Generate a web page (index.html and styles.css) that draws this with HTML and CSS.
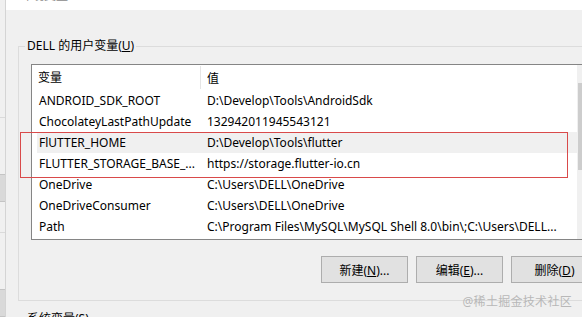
FILE: index.html
```html
<!DOCTYPE html>
<html lang="zh-CN">
  <head>
    <meta charset="UTF-8" />
    <meta name="viewport" content="width=device-width, initial-scale=1.0" />
    <title>环境变量</title>
    <link rel="stylesheet" href="styles.css">
  </head>
  <body>
    <div class="side">
      <div class="side-top"></div>
      <div class="side-part"></div>
      <div class="side-btn"></div>
      <div class="side-mid"></div>
      <div class="side-part"></div>
      <div class="side-btn"></div>
    </div>

    <div class="dialog">
      <div class="title"><span>环境变量</span></div>

      <fieldset class="group">
        <legend>DELL 的用户变量(<u>U</u>)</legend>

        <div class="list">
          <div class="rows">
            <div class="list-head">
              <div class="head-name">变量</div>
              <div class="head-value">值</div>
            </div>
            <div class="row">
              <div class="cell-name">ANDROID_SDK_ROOT</div>
              <div class="cell-value">D:\Develop\Tools\AndroidSdk</div>
            </div>
            <div class="row">
              <div class="cell-name">ChocolateyLastPathUpdate</div>
              <div class="cell-value">132942011945543121</div>
            </div>
            <div class="row hover">
              <div class="cell-name">FlUTTER_HOME</div>
              <div class="cell-value">D:\Develop\Tools\flutter</div>
            </div>
            <div class="row">
              <div class="cell-name">FLUTTER_STORAGE_BASE_...</div>
              <div class="cell-value">https://storage.flutter-io.cn</div>
            </div>
            <div class="row">
              <div class="cell-name">OneDrive</div>
              <div class="cell-value">C:\Users\DELL\OneDrive</div>
            </div>
            <div class="row">
              <div class="cell-name">OneDriveConsumer</div>
              <div class="cell-value">C:\Users\DELL\OneDrive</div>
            </div>
            <div class="row">
              <div class="cell-name">Path</div>
              <div class="cell-value">C:\Program Files\MySQL\MySQL Shell 8.0\bin\;C:\Users\DELL...</div>
            </div>
          </div>
          <div class="scrollbar">
            <div class="scroll-up"></div>
            <div class="scroll-thumb"></div>
          </div>
          <div class="mark"></div>
        </div>

        <div class="buttons">
          <button type="button">新建(<u>N</u>)...</button>
          <button type="button">编辑(<u>E</u>)...</button>
          <button type="button">删除(<u>D</u>)</button>
        </div>
      </fieldset>

      <fieldset class="group">
        <legend>系统变量(<u>S</u>)</legend>
      </fieldset>
    </div>

    <div class="watermark">@稀土掘金技术社区</div>
  </body>
</html>
```

FILE: styles.css
```css
body {
  font-family: "Noto Sans", "Noto Sans CJK SC", sans-serif;
  font-size: 12px;
  color: #000;
  margin: 0;
  padding: 0;
  width: 582px;
  height: 317px;
  overflow: hidden;
  display: flex;
  background-color: #f0f0f0;
}

.side {
  width: 5px;
  flex-shrink: 0;
  border-right: 1px solid #d4d4d4;
  display: flex;
  flex-direction: column;
}

.side-top {
  height: 123px;
  border-bottom: 1px solid #dadada;
}

.side-part {
  height: 59px;
}

.side-btn {
  height: 27px;
  background-color: #d9d9d9;
  border-top: 1px solid #c4c4c4;
  border-bottom: 1px solid #c4c4c4;
}

.side-mid {
  height: 32px;
  border-bottom: 1px solid #dadada;
}

.dialog {
  width: 640px;
  flex-shrink: 0;
}

.title {
  height: 10px;
  background-color: #fff;
  overflow: hidden;
  display: flex;
  align-items: flex-end;
  padding-left: 14px;
}

.title span {
  line-height: 16px;
  color: #8a8a8a;
  margin-bottom: 6px;
}

.group {
  margin: 27px 0 0 12px;
  padding: 0 0 17px 6px;
  border: 1px solid #dcdcdc;
  min-width: 0;
}

.group legend {
  padding: 0 2px;
  line-height: 18px;
}

.group + .group {
  margin-top: 9px;
}

.list {
  position: relative;
  width: 562px;
  margin: 9px 0 0 6px;
  border: 1px solid #858585;
  background-color: #fff;
  display: flex;
}

.rows {
  flex: 1;
  height: 174px;
}

.list-head {
  height: 25px;
  display: flex;
  align-items: center;
}

.head-name {
  width: 162px;
  padding-left: 6px;
  line-height: 23px;
  border-right: 1px solid #e5e5e5;
}

.head-value {
  padding-left: 6px;
}

.row {
  height: 21px;
  margin-left: 5px;
  display: flex;
  align-items: center;
  white-space: nowrap;
}

.row.hover {
  background-color: #f0f0f0;
}

.cell-name {
  width: 161px;
  padding-left: 2px;
}

.cell-value {
  padding-left: 7px;
}

.scrollbar {
  width: 17px;
  background-color: #f0f0f0;
  display: flex;
  flex-direction: column;
}

.scroll-up {
  height: 18px;
}

.scroll-thumb {
  height: 87px;
  margin: 0 1px;
  background-color: #cdcdcd;
}

.mark {
  position: absolute;
  left: -12px;
  top: 67px;
  width: 546px;
  height: 44px;
  border: 1px solid #d94a4a;
}

.buttons {
  width: 567px;
  margin: 16px 0 0 6px;
  display: flex;
  justify-content: flex-end;
  gap: 8px;
}

.buttons button {
  width: 87px;
  height: 27px;
  font-family: inherit;
  font-size: 12px;
  color: #000;
  background-color: #e1e1e1;
  border: 1px solid #adadad;
  padding: 0;
}

.watermark {
  position: absolute;
  right: 10px;
  top: 292px;
  font-size: 12px;
  letter-spacing: 0.3px;
  color: #b8b8b8;
}
```
